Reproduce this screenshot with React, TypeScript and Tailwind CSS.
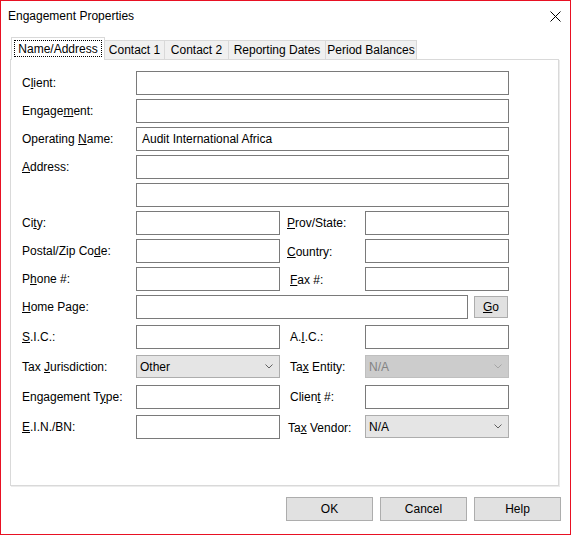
import React from "react";

// small dropdown arrow used in the combo boxes
const Chevron = ({ color = "#606060" }: { color?: string }) => (
  <svg width="8" height="5" viewBox="0 0 8 5" fill="none">
    <path d="M0.5 0.5L4 4L7.5 0.5" stroke={color} strokeWidth="1" />
  </svg>
);

function Field({ children, className = "" }: { children?: React.ReactNode; className?: string }) {
  return (
    <div className={`h-[24px] border border-[#7a7a7a] bg-white pl-[5px] pt-[3px] leading-[16px] whitespace-nowrap ${className}`}>
      {children}
    </div>
  );
}

function Combo({ value, disabled = false }: { value: string; disabled?: boolean }) {
  return (
    <div
      className={`h-[23px] flex justify-between border pl-[3px] pr-[6px] pt-[3px] leading-[16px] ${
        disabled ? "border-[#bfbfbf] bg-[#cccccc] text-[#838383]" : "border-[#adadad] bg-[#e5e5e5]"
      }`}
    >
      <span>{value}</span>
      <span className="self-center -mt-[3px]">
        <Chevron color={disabled ? "#a6a6a6" : "#606060"} />
      </span>
    </div>
  );
}

function Label({ children, className = "pt-[4px]" }: { children: React.ReactNode; className?: string }) {
  return <div className={`leading-[16px] whitespace-nowrap ${className}`}>{children}</div>;
}

const row = "grid grid-cols-[114px_144px_85px_144px] h-[24px]";

export default function App() {
  return (
    <div className="w-[571px] h-[535px] border border-[#e81123] bg-white font-['Liberation_Sans',Arial,sans-serif] text-[12px] text-black leading-[16px] flex flex-col overflow-hidden">
      {/* title bar */}
      <div className="h-[30px] shrink-0 flex items-center justify-between pl-[7px] pr-[9px]">
        <span>Engagement Properties</span>
        <svg width="11" height="11" viewBox="0 0 11 11">
          <path d="M0.5 0.5L10.5 10.5M10.5 0.5L0.5 10.5" stroke="#000" strokeWidth="1" />
        </svg>
      </div>

      {/* tabs */}
      <div className="mt-[6px] ml-[10px] h-[22px] flex items-end relative z-10">
        <div className="w-[94px] h-[23px] -mb-[1px] border border-b-0 border-[#d9d9d9] bg-white flex justify-center pt-[2px]">
          <span className="h-[17px] px-[3px] border border-dotted border-black flex items-center">Name/Address</span>
        </div>
        <div className="w-[60px] h-[19px] border-t border-r border-[#d9d9d9] bg-[#f0f0f0] flex items-center justify-center">Contact 1</div>
        <div className="w-[64px] h-[19px] border-t border-r border-[#d9d9d9] bg-[#f0f0f0] flex items-center justify-center">Contact 2</div>
        <div className="w-[97px] h-[19px] border-t border-r border-[#d9d9d9] bg-[#f0f0f0] flex items-center justify-center">Reporting Dates</div>
        <div className="w-[91px] h-[19px] border-t border-r border-[#d9d9d9] bg-[#f0f0f0] flex items-center justify-center">Period Balances</div>
      </div>

      {/* tab page */}
      <div className="ml-[9px] w-[549px] h-[427px] shrink-0 border border-[#d9d9d9] shadow-[1px_1px_0_#ececec] pt-[11px] pl-[11px]">
        <div className="flex flex-col gap-[4px]">
          <div className={row}>
            <Label>C<u>l</u>ient:</Label>
            <Field className="col-span-3" />
          </div>
          <div className={row}>
            <Label>Engage<u>m</u>ent:</Label>
            <Field className="col-span-3" />
          </div>
          <div className={row}>
            <Label>Operating <u>N</u>ame:</Label>
            <Field className="col-span-3">Audit International Africa</Field>
          </div>
          <div className={row}>
            <Label><u>A</u>ddress:</Label>
            <Field className="col-span-3" />
          </div>
          <div className={row}>
            <div />
            <Field className="col-span-3" />
          </div>
          <div className={row}>
            <Label>Ci<u>t</u>y:</Label>
            <Field />
            <Label className="pt-[4px] pl-[7px]"><u>P</u>rov/State:</Label>
            <Field />
          </div>
          <div className={row}>
            <Label>Postal/Zip Co<u>d</u>e:</Label>
            <Field />
            <Label className="pt-[5px] pl-[7px]"><u>C</u>ountry:</Label>
            <Field />
          </div>
          <div className={row}>
            <Label>P<u>h</u>one #:</Label>
            <Field />
            <Label className="pt-[5px] pl-[10px]"><u>F</u>ax #:</Label>
            <Field />
          </div>
          <div className={row}>
            <Label><u>H</u>ome Page:</Label>
            <div className="col-span-3 flex">
              <Field className="w-[332px]" />
              <button className="ml-[6px] mt-[1px] w-[34px] h-[22px] border border-[#adadad] bg-[#e1e1e1] flex items-center justify-center">
                <span><u>G</u>o</span>
              </button>
            </div>
          </div>
        </div>

        <div className="mt-[6px] flex flex-col gap-[6px]">
          <div className={row}>
            <Label><u>S</u>.I.C.:</Label>
            <Field />
            <Label className="pt-[4px] pl-[10px]">A.<u>I</u>.C.:</Label>
            <Field />
          </div>
          <div className={row}>
            <Label>Tax <u>J</u>urisdiction:</Label>
            <Combo value="Other" />
            <Label className="pt-[4px] pl-[10px]">Ta<u>x</u> Entity:</Label>
            <Combo value="N/A" disabled />
          </div>
          <div className={row}>
            <Label>Engagement T<u>y</u>pe:</Label>
            <Field />
            <Label className="pt-[4px] pl-[10px]">Clien<u>t</u> #:</Label>
            <Field />
          </div>
          <div className={row}>
            <Label><u>E</u>.I.N./BN:</Label>
            <Field />
            <Label className="pt-[5px] pl-[8px]">Ta<u>x</u> Vendor:</Label>
            <Combo value="N/A" />
          </div>
        </div>
      </div>

      {/* dialog buttons */}
      <div className="mt-[11px] flex justify-end gap-[7px] pr-[9px]">
        <button className="w-[87px] h-[24px] border border-[#adadad] bg-[#e1e1e1]">OK</button>
        <button className="w-[87px] h-[24px] border border-[#adadad] bg-[#e1e1e1]">Cancel</button>
        <button className="w-[87px] h-[24px] border border-[#adadad] bg-[#e1e1e1]">Help</button>
      </div>
    </div>
  );
}
